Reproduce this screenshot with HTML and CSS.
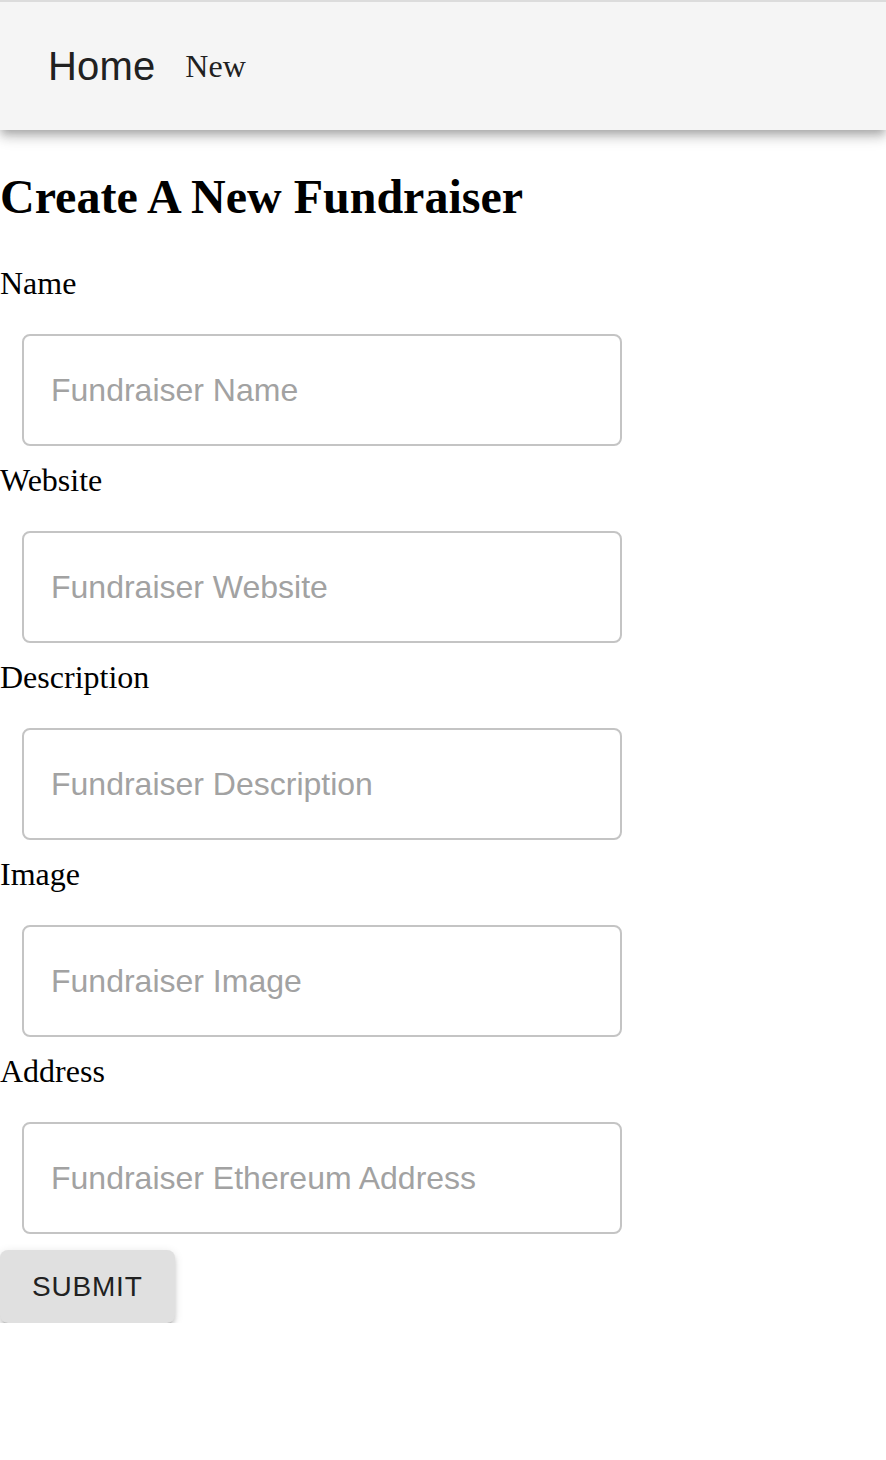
FILE: index.html
```html
<!DOCTYPE html>
<html>
<head>
<meta charset="utf-8">
<link rel="stylesheet" href="styles.css">
</head>
<body>
<header class="appbar">
  <div class="toolbar">
    <span class="brand">Home</span>
    <a class="navlink">New</a>
  </div>
</header>
<main class="page">
  <h2 class="title">Create A New Fundraiser</h2>
  <label class="label">Name</label>
  <div class="field"><input class="input" type="text" placeholder="Fundraiser Name"></div>
  <label class="label">Website</label>
  <div class="field"><input class="input" type="text" placeholder="Fundraiser Website"></div>
  <label class="label">Description</label>
  <div class="field"><input class="input" type="text" placeholder="Fundraiser Description"></div>
  <label class="label">Image</label>
  <div class="field"><input class="input" type="text" placeholder="Fundraiser Image"></div>
  <label class="label">Address</label>
  <div class="field"><input class="input" type="text" placeholder="Fundraiser Ethereum Address"></div>
  <button class="submit" type="button">Submit</button>
</main>
</body>
</html>
```

FILE: styles.css
```css
html, body {
  margin: 0;
  padding: 0;
  background: #ffffff;
}
body {
  font-family: "Liberation Serif", "Times New Roman", serif;
  font-size: 32px;
  color: #000;
  border-top: 2px solid #dcdcdc;
}
.appbar {
  background: #f5f5f5;
  box-shadow: 0 4px 8px -2px rgba(0,0,0,0.2), 0 8px 10px 0 rgba(0,0,0,0.14), 0 2px 20px 0 rgba(0,0,0,0.12);
  position: relative;
}
.toolbar {
  display: flex;
  align-items: center;
  min-height: 128px;
  padding: 0 48px;
}
.brand {
  font-family: "Liberation Sans", Arial, sans-serif;
  font-size: 40px;
  line-height: 1.6;
  color: #212121;
  margin-right: 30px;
  letter-spacing: 0.15px;
}
.navlink {
  font-family: "Liberation Serif", "Times New Roman", serif;
  font-size: 32px;
  color: #212121;
}
.page {
  display: flex;
  flex-direction: column;
  align-items: flex-start;
}
.title {
  font-size: 48px;
  font-weight: bold;
  margin: 39px 0 41px;
}
.label {
  font-size: 32px;
  line-height: 37px;
}
.field {
  margin: 32px 0 16px 22px;
}
.input {
  box-sizing: border-box;
  width: 600px;
  height: 112px;
  border: 2px solid #c4c4c4;
  border-radius: 8px;
  padding: 0 28px 0 27px;
  font-family: "Liberation Sans", Arial, sans-serif;
  font-size: 32px;
  color: #212121;
  background: #fff;
  outline: none;
}
.input::placeholder {
  color: #a2a2a2;
  opacity: 1;
}
.submit {
  font-family: "Liberation Sans", Arial, sans-serif;
  font-size: 28px;
  text-transform: uppercase;
  letter-spacing: 0.8px;
  line-height: 49px;
  padding: 12px 32px;
  background: #e0e0e0;
  color: #212121;
  border: none;
  border-radius: 8px;
  box-shadow: 0 6px 2px -4px rgba(0,0,0,0.2), 0 4px 4px 0 rgba(0,0,0,0.14), 0 2px 10px 0 rgba(0,0,0,0.12);
  cursor: pointer;
}
```
